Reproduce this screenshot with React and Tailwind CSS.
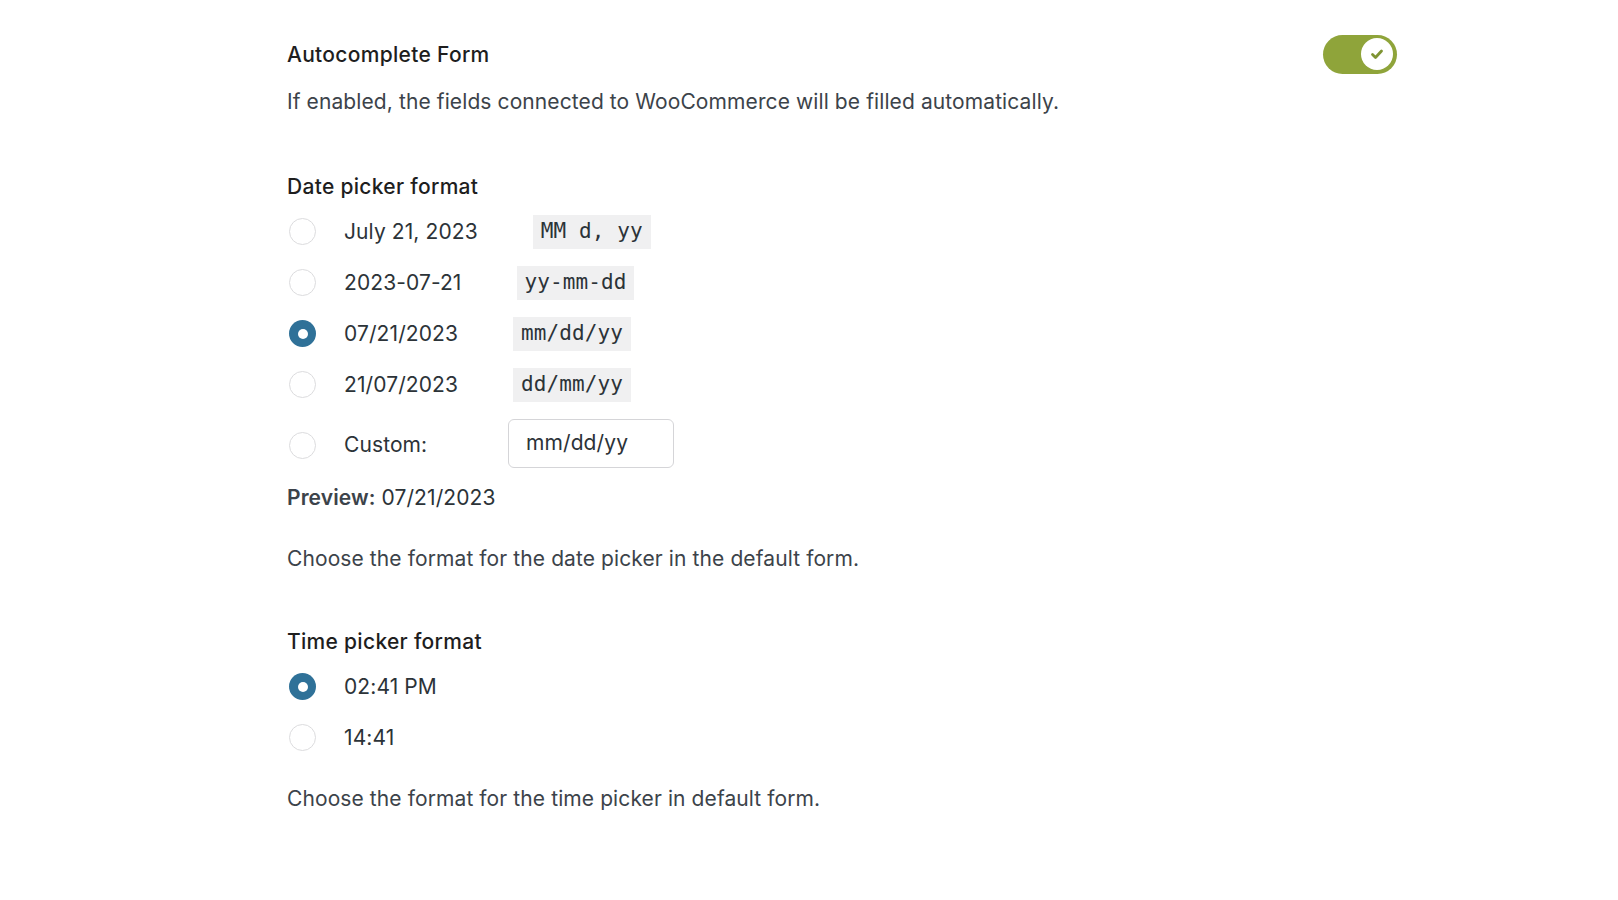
import React from "react";

function Radio({ checked }) {
  return checked ? (
    <span className="flex h-[27px] w-[27px] shrink-0 items-center justify-center rounded-full bg-[#2f7198]">
      <span className="block h-[10px] w-[10px] rounded-full bg-white" />
    </span>
  ) : (
    <span className="block h-[27px] w-[27px] shrink-0 rounded-full border border-[#dcdcde] bg-white" />
  );
}

function Row({ checked, label, code }) {
  return (
    <div className="flex h-[51px] items-center">
      <span className="ml-[2px] block"><Radio checked={checked} /></span>
      <span className="ml-[28px] text-[21px] text-[#2c3338]">{label}</span>
      {code && (
        <code className="ml-[55px] flex h-[34px] items-center bg-[#f0f0f1] px-[8px] font-['DejaVu_Sans_Mono',monospace] text-[21px] text-[#2c3338]">
          {code}
        </code>
      )}
    </div>
  );
}

export default function App() {
  return (
    <div className="min-h-[900px] w-[1618px] bg-white font-['Inter','Noto_Sans',sans-serif] tracking-[0.1px]">
      <div className="ml-[287px] w-[1110px] pt-[35px]">
        <div className="flex h-[39px] items-center justify-between">
          <span className="text-[21px] font-medium tracking-[0.3px] text-[#1e1e1e]">Autocomplete Form</span>
          <span className="-mt-[1px] flex h-[39px] w-[74px] items-center justify-end rounded-full bg-[#8fa43a] pr-[4px]">
            <span className="flex h-[32px] w-[32px] items-center justify-center rounded-full bg-white">
              <svg width="16" height="16" viewBox="0 0 16 16" fill="none">
                <path d="M3.5 8.5l3 3 6-6.5" stroke="#7f9433" strokeWidth="2.8" strokeLinecap="round" strokeLinejoin="round" />
              </svg>
            </span>
          </span>
        </div>
        <p className="mt-[14px] h-[28px] text-[21px] leading-[28px] text-[#3c434a]">
          If enabled, the fields connected to WooCommerce will be filled automatically.
        </p>

        <h3 className="mt-[57px] h-[28px] text-[21px] font-medium leading-[28px] tracking-[0.3px] text-[#1e1e1e]">Date picker format</h3>
        <div className="mt-[5px]">
          <Row label="July 21, 2023" code="MM d, yy" />
          <Row label="2023-07-21" code="yy-mm-dd" />
          <Row checked label="07/21/2023" code="mm/dd/yy" />
          <Row label="21/07/2023" code="dd/mm/yy" />
          <div className="mt-[9px] flex h-[52px] items-center">
            <span className="ml-[2px] block"><Radio /></span>
            <span className="ml-[28px] w-[164px] text-[21px] text-[#2c3338]">Custom:</span>
            <span className="-mt-[4px] flex h-[49px] w-[166px] items-center rounded-[6px] border border-[#d5d5d8] pl-[17px] text-[21px] text-[#2c3338]">
              mm/dd/yy
            </span>
          </div>
        </div>
        <p className="mt-[13px] h-[28px] text-[21px] leading-[28px] text-[#2c3338]">
          <span className="font-semibold text-[#3c434a]">Preview:</span> 07/21/2023
        </p>
        <p className="mt-[33px] h-[28px] text-[21px] leading-[28px] text-[#3c434a]">
          Choose the format for the date picker in the default form.
        </p>

        <h3 className="mt-[55px] h-[28px] text-[21px] font-medium leading-[28px] tracking-[0.3px] text-[#1e1e1e]">Time picker format</h3>
        <div className="mt-[5px]">
          <Row checked label="02:41 PM" />
          <Row label="14:41" />
        </div>
        <p className="mt-[22px] h-[28px] text-[21px] leading-[28px] text-[#3c434a]">
          Choose the format for the time picker in default form.
        </p>
      </div>
    </div>
  );
}
